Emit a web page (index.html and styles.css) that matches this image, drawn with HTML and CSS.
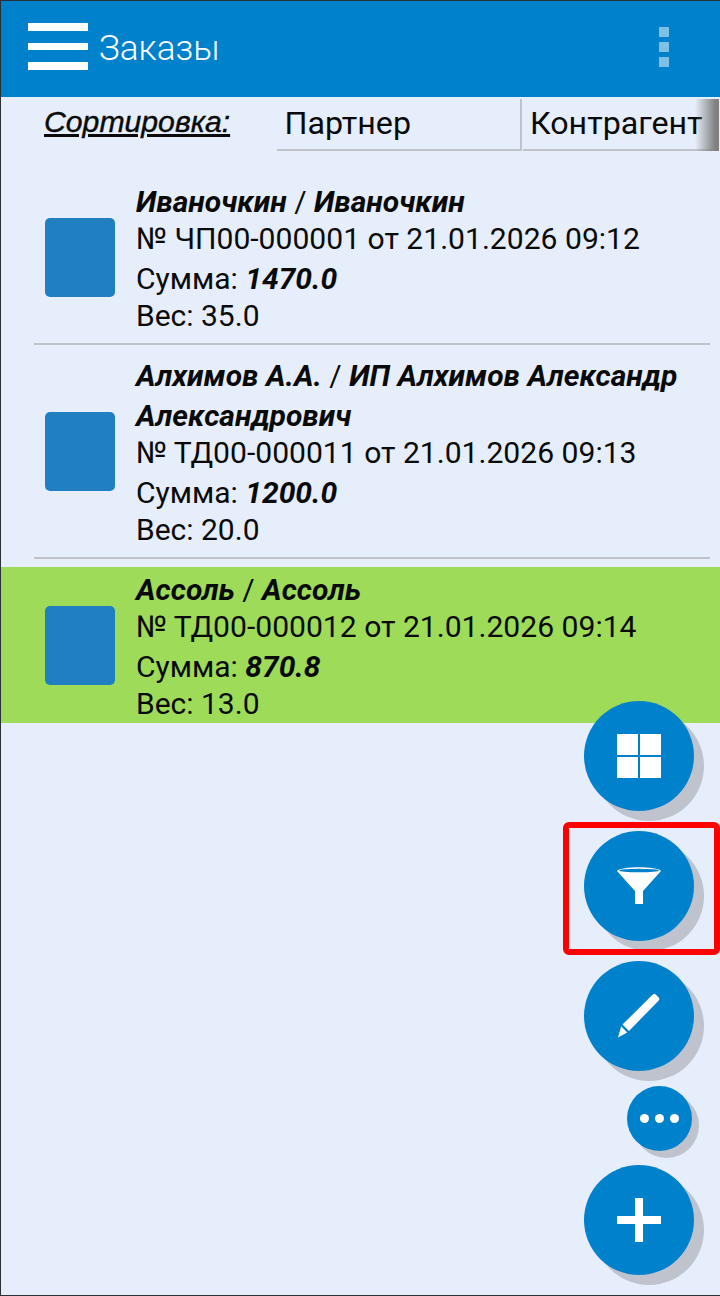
FILE: index.html
```html
<!DOCTYPE html>
<html lang="ru">
<head>
    <meta charset="UTF-8">
    <meta name="viewport" content="width=device-width, initial-scale=1.0">
    <title>Заказы</title>
    <link rel="stylesheet" href="styles.css">
</head>
<body>
    <div class="screen">
        <div class="header">
            <div class="burger"><span></span><span></span><span></span></div>
            <div class="title">Заказы</div>
            <div class="menu-dots"><span></span><span></span><span></span></div>
        </div>

        <div class="sort-bar">
            <div class="sort-label">Сортировка:</div>
            <div class="sort-tabs">
                <div class="sort-tab partner">Партнер</div>
                <div class="sort-tab agent">Контрагент</div>
                <div class="sort-fade"></div>
            </div>
        </div>

        <div class="order-list">
            <div class="order">
                <div class="order-icon"></div>
                <div class="order-text">
                    <div class="order-name"><b>Иваночкин</b> / <b>Иваночкин</b></div>
                    <div class="order-doc">№ ЧП00-000001 от 21.01.2026 09:12</div>
                    <div class="order-sum">Сумма: <b>1470.0</b></div>
                    <div class="order-weight">Вес: 35.0</div>
                </div>
            </div>
            <div class="divider"></div>
            <div class="order">
                <div class="order-icon"></div>
                <div class="order-text">
                    <div class="order-name"><b>Алхимов А.А.</b> / <b>ИП Алхимов Александр Александрович</b></div>
                    <div class="order-doc">№ ТД00-000011 от 21.01.2026 09:13</div>
                    <div class="order-sum">Сумма: <b>1200.0</b></div>
                    <div class="order-weight">Вес: 20.0</div>
                </div>
            </div>
            <div class="divider"></div>
            <div class="order selected">
                <div class="order-icon"></div>
                <div class="order-text">
                    <div class="order-name"><b>Ассоль</b> / <b>Ассоль</b></div>
                    <div class="order-doc">№ ТД00-000012 от 21.01.2026 09:14</div>
                    <div class="order-sum">Сумма: <b>870.8</b></div>
                    <div class="order-weight">Вес: 13.0</div>
                </div>
            </div>
        </div>

        <div class="fab fab-grid">
            <svg width="44" height="44" viewBox="0 0 44 44"><path fill="#fff" d="M0 0h21v21H0zM23 0h21v21H23zM0 23h21v21H0zM23 23h21v21H23z"/></svg>
        </div>
        <div class="fab fab-filter">
            <svg width="44" height="38" viewBox="0 0 44 38"><path fill="#fff" d="M0 4C4-1 40-1 44 4L26 24V37H18V24Z"/><ellipse fill="#0081cc" cx="22" cy="3.500" rx="20" ry="1.800"/></svg>
        </div>
        <div class="highlight-box"></div>
        <div class="fab fab-edit">
            <svg width="42" height="44" viewBox="0 0 42 44"><path fill="#fff" d="M34.500.8a2.500 2.500 0 0 1 3.500 0l2.500 2.500a2.500 2.500 0 0 1 0 3.500L11 37 4.500 30.500ZM3.200 32.300l6 6.200L0 43.500Z"/></svg>
        </div>
        <div class="fab fab-small">
            <span class="dot"></span><span class="dot"></span><span class="dot"></span>
        </div>
        <div class="fab fab-add">
            <svg width="44" height="44" viewBox="0 0 44 44"><path fill="#fff" d="M18 0h8v18h18v8H26v18h-8V26H0v-8h18z"/></svg>
        </div>
    </div>
</body>
</html>
```

FILE: styles.css
```css
* {
    margin: 0;
    padding: 0;
    box-sizing: border-box;
}

html, body {
    width: 720px;
    height: 1296px;
    overflow: hidden;
}

body {
    font-family: Roboto, "Liberation Sans", sans-serif;
    background: #2b2f36;
    color: #0a0a0a;
}

.screen {
    position: relative;
    width: 719px;
    height: 1294px;
    margin: 1px 0 0 1px;
    background: #e6eefb;
    overflow: hidden;
}

.header {
    height: 96px;
    background: #0081cc;
    display: flex;
    align-items: flex-start;
}

.burger {
    width: 60px;
    margin: 22px 0 0 27px;
    display: flex;
    flex-direction: column;
    gap: 12px;
}

.burger span {
    height: 7.500px;
    background: #fff;
}

.title {
    margin: 26px 0 0 11px;
    font-size: 35px;
    font-weight: 300;
    line-height: 44px;
    color: #fff;
}

.menu-dots {
    margin: 26px 51px 0 auto;
    display: flex;
    flex-direction: column;
    gap: 5px;
}

.menu-dots span {
    width: 10px;
    height: 10px;
    background: #7fc0e6;
}

.sort-bar {
    height: 82px;
    display: flex;
    align-items: flex-start;
}

.sort-label {
    margin: 7px 0 0 43px;
    width: 233px;
    font-family: "Liberation Sans", sans-serif;
    font-size: 30.200px;
    font-style: italic;
    line-height: 36px;
    text-decoration: underline;
    -webkit-text-stroke: 0.4px #0a0a0a;
}

.sort-tabs {
    position: relative;
    display: flex;
    height: 52px;
    margin: 2px 1px 0 0;
    flex: 1;
}

.sort-tab {
    font-size: 32.200px;
    line-height: 48px;
    border-bottom: 2px solid #bfc3c9;
    white-space: nowrap;
}

.partner {
    width: 245px;
    padding-left: 7.500px;
    border-right: 2px solid #bfc3c9;
}

.agent {
    flex: 1;
    padding-left: 7px;
    margin-left: 1px;
    overflow: hidden;
}

.sort-fade {
    position: absolute;
    top: 0;
    right: 0;
    width: 24px;
    height: 52px;
    background: linear-gradient(to right, rgba(130,130,130,0), #808080 85%);
}

.order {
    display: flex;
    align-items: center;
    padding: 3px 0 5px;
}

.order.selected {
    background: #9edb58;
}

.order-icon {
    width: 70px;
    height: 79px;
    margin: 2px 21px 0 44px;
    flex-shrink: 0;
    background: #1f7fc0;
    border-radius: 5px;
}

.order-text {
    flex: 1;
    font-size: 30px;
}

.order-name {
    line-height: 40px;
}

.order-name b, .order-sum b {
    font-style: italic;
    font-weight: 700;
}

.order-doc {
    font-size: 30.100px;
    line-height: 34px;
}

.order-sum {
    line-height: 46px;
}

.order-weight {
    line-height: 28px;
}

.divider {
    height: 2px;
    margin: 8px 10px 8px 33px;
    background: #bfc3c9;
}

.fab {
    position: absolute;
    left: 583px;
    width: 110px;
    height: 110px;
    border-radius: 50%;
    background: #0081cc;
    box-shadow: 10px 10px 0 #bec3ce;
    display: flex;
    align-items: center;
    justify-content: center;
    gap: 6px;
}

.fab-grid { top: 700px; }
.fab-filter { top: 830px; }
.fab-edit { top: 960px; }
.fab-add { top: 1164px; }

.fab-small {
    top: 1085px;
    left: 626px;
    width: 65px;
    height: 65px;
    box-shadow: 7px 7px 0 #bec3ce;
}

.dot {
    width: 9px;
    height: 9px;
    border-radius: 50%;
    background: #fff;
}

.highlight-box {
    position: absolute;
    left: 562px;
    top: 821px;
    width: 157px;
    height: 133px;
    border: 6px solid #fd0000;
    border-radius: 6px;
}
```
